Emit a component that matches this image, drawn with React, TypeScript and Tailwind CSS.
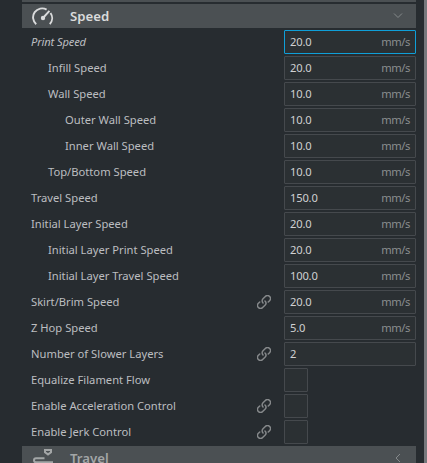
import React from 'react';

type Setting = {
  label: string;
  indent?: 0 | 1 | 2;
  value?: string;
  unit?: string;
  linked?: boolean;
  active?: boolean;
};

const settings: Setting[] = [
  { label: 'Print Speed', value: '20.0', unit: 'mm/s', active: true },
  { label: 'Infill Speed', indent: 1, value: '20.0', unit: 'mm/s' },
  { label: 'Wall Speed', indent: 1, value: '10.0', unit: 'mm/s' },
  { label: 'Outer Wall Speed', indent: 2, value: '10.0', unit: 'mm/s' },
  { label: 'Inner Wall Speed', indent: 2, value: '10.0', unit: 'mm/s' },
  { label: 'Top/Bottom Speed', indent: 1, value: '10.0', unit: 'mm/s' },
  { label: 'Travel Speed', value: '150.0', unit: 'mm/s' },
  { label: 'Initial Layer Speed', value: '20.0', unit: 'mm/s' },
  { label: 'Initial Layer Print Speed', indent: 1, value: '20.0', unit: 'mm/s' },
  { label: 'Initial Layer Travel Speed', indent: 1, value: '100.0', unit: 'mm/s' },
  { label: 'Skirt/Brim Speed', value: '20.0', unit: 'mm/s', linked: true },
  { label: 'Z Hop Speed', value: '5.0', unit: 'mm/s' },
  { label: 'Number of Slower Layers', value: '2', linked: true },
  { label: 'Equalize Filament Flow' },
  { label: 'Enable Acceleration Control', linked: true },
  { label: 'Enable Jerk Control', linked: true },
];

const indents = ['pl-[9px]', 'pl-[26px]', 'pl-[43px]'];

function GaugeIcon() {
  return (
    <svg width="22" height="20" viewBox="0 0 22 20" fill="none" stroke="#dadbdc" strokeWidth="1.9">
      <path d="M4.2 18.2A9 9 0 0 1 14.6 3.6M18.5 7A9 9 0 0 1 17.8 18.2" />
      <path d="M11 12L17.4 4.8" />
      <circle cx="11" cy="12" r="2.2" fill="#dadbdc" stroke="none" />
    </svg>
  );
}

function TravelIcon() {
  return (
    <svg width="22" height="20" viewBox="0 0 22 20" fill="none" stroke="#a3a6a7" strokeWidth="2">
      <path d="M13 2H19V4.2L16 6.4L13 4.2Z" />
      <path d="M12.5 10.3H4A2 2 0 0 0 4 14.3H21" />
    </svg>
  );
}

function LinkIcon() {
  return (
    <svg width="14" height="14" viewBox="-7 -7 14 14" fill="none" stroke="#85888a" strokeWidth="1.5" strokeLinecap="round">
      <g transform="rotate(-45)">
        <path d="M3 3H4.9A3 3 0 0 0 4.9 -3H1.6A3 3 0 0 0 -1.4 0" />
        <path d="M-3 -3H-4.9A3 3 0 0 0 -4.9 3H-1.6A3 3 0 0 0 1.4 0" />
      </g>
    </svg>
  );
}

function SettingRow({ label, indent = 0, value, unit, linked, active }: Setting) {
  return (
    <div className="flex h-6 items-center">
      <div className={`flex-1 whitespace-nowrap ${indents[indent]} ${active ? 'italic tracking-[-0.15px]' : ''}`}>{label}</div>
      {linked && <div className="mr-[13px]"><LinkIcon /></div>}
      {value ? (
        <div className={`flex h-6 w-[132px] items-center justify-between rounded-[1px] border bg-[#2b3033] pr-[5px] pl-[5px] ${active ? 'border-[#0f9fd8]' : 'border-[#45494d]'}`}>
          <span className="tracking-[-0.2px] text-[#d0d1d2]">{value}</span>
          <span className="tracking-[-0.4px] text-[#8a8d8f]">{unit}</span>
        </div>
      ) : (
        <div className="mr-[108px] size-6 rounded-[1px] border border-[#45494d] bg-[#2b3033]" />
      )}
    </div>
  );
}

export default function App() {
  return (
    <div className="flex h-[463px] w-[427px] justify-between overflow-hidden bg-[#272c30] pl-[22px] font-['Noto_Sans',sans-serif] text-[11.2px] leading-6 text-[#bcbec0]">
      <div className="flex w-[394px] flex-col gap-0.5">
        <div className="h-0.5 shrink-0 bg-[#4b5053]" />
        <div className="flex h-6 shrink-0 items-center bg-[#4b5053] pl-[10px]">
          <GaugeIcon />
          <span className="ml-4 flex-1 text-[13.2px] font-semibold text-[#dadbdc]">Speed</span>
          <svg className="mr-[13px]" width="10" height="6" viewBox="0 0 10 6" fill="none" stroke="#85898b"><path d="M1 .5L5 4.5L9 .5" /></svg>
        </div>
        {settings.map((setting) => <SettingRow key={setting.label} {...setting} />)}
        <div className="flex h-6 shrink-0 items-center bg-[#4b5053] pl-[10px]">
          <TravelIcon />
          <span className="ml-4 flex-1 text-[13.2px] font-semibold text-[#a3a6a7]">Travel</span>
          <svg className="mr-[15px]" width="6" height="10" viewBox="0 0 6 10" fill="none" stroke="#85898b"><path d="M5 1L1 5L5 9" /></svg>
        </div>
      </div>
      <div className="w-[3px] bg-[#77797d]" />
    </div>
  );
}
